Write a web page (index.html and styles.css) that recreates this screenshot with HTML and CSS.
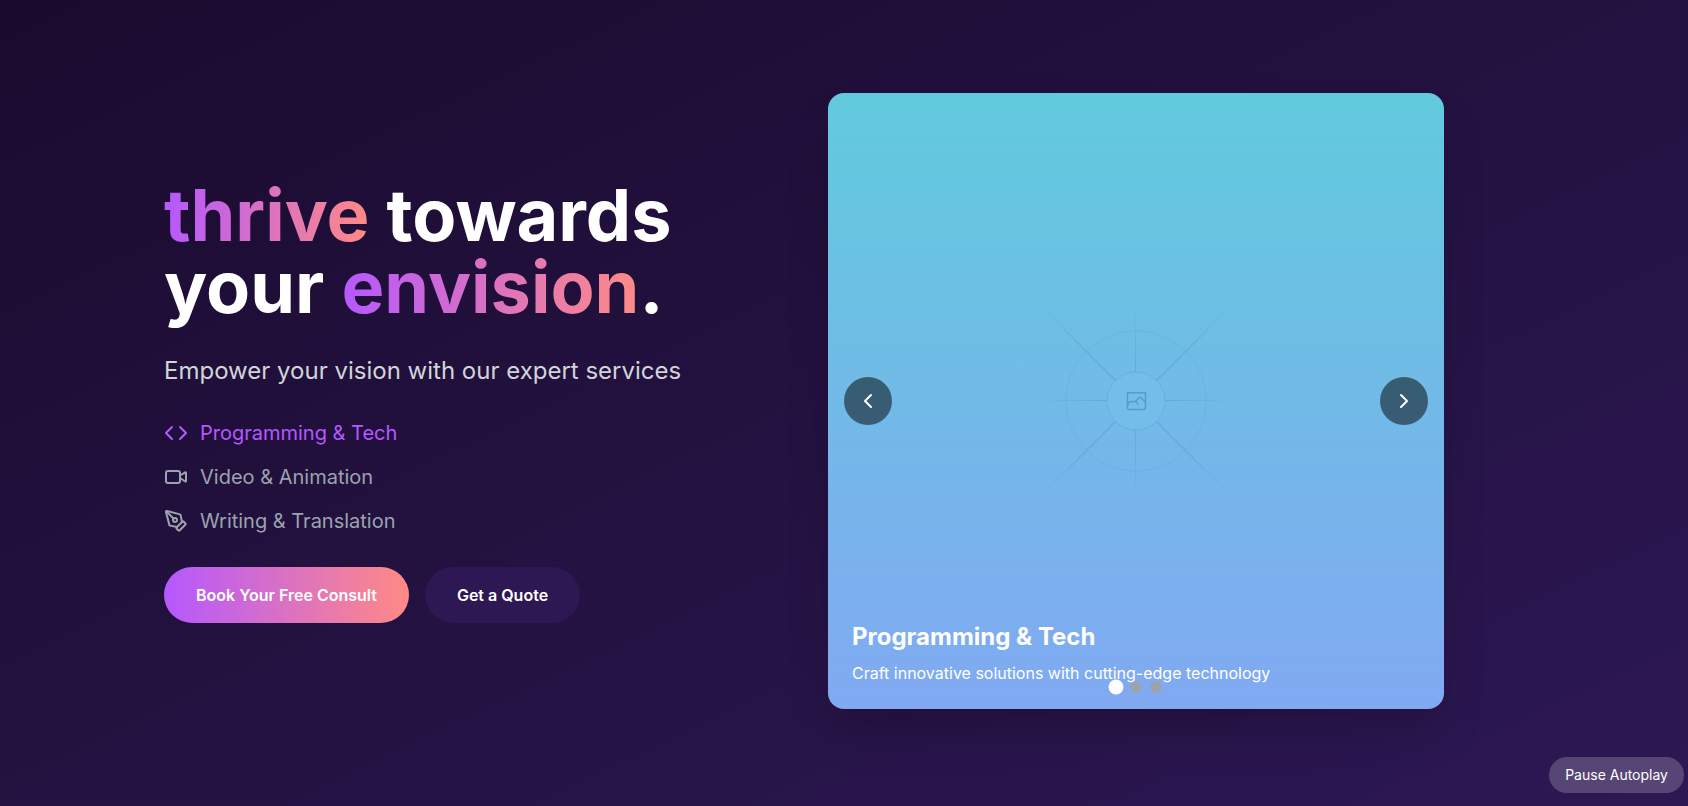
FILE: index.html
```html
<!DOCTYPE html>
<html lang="en">
<head>
<meta charset="utf-8">
<meta name="viewport" content="width=device-width, initial-scale=1">
<title>Thrive towards your envision</title>
<link rel="stylesheet" href="styles.css">
</head>
<body>
<main class="hero">
  <div class="hero-grid">
    <section class="intro">
      <h1 class="headline"><span class="accent">thrive</span> towards<br>your <span class="accent">envision</span>.</h1>
      <p class="lead">Empower your vision with our expert services</p>
      <ul class="services">
        <li class="service service-active">
          <svg class="icon" viewBox="0 0 24 24" aria-hidden="true"><path d="m16 18 6-6-6-6"/><path d="m8 6-6 6 6 6"/></svg>
          <span>Programming &amp; Tech</span>
        </li>
        <li class="service">
          <svg class="icon" viewBox="0 0 24 24" aria-hidden="true"><path d="m16 13 5.223 3.482a.5.5 0 0 0 .777-.416V7.87a.5.5 0 0 0-.752-.432L16 10.5"/><rect x="2" y="6" width="14" height="12" rx="2"/></svg>
          <span>Video &amp; Animation</span>
        </li>
        <li class="service">
          <svg class="icon" viewBox="0 0 24 24" aria-hidden="true"><path d="M15.707 21.293a1 1 0 0 1-1.414 0l-1.586-1.586a1 1 0 0 1 0-1.414l5.586-5.586a1 1 0 0 1 1.414 0l1.586 1.586a1 1 0 0 1 0 1.414z"/><path d="m18 13-1.375-6.874a1 1 0 0 0-.746-.776L3.235 2.028a1 1 0 0 0-1.207 1.207L5.35 15.879a1 1 0 0 0 .776.746L13 18"/><path d="m2.3 2.3 7.286 7.286"/><circle cx="11" cy="11" r="2"/></svg>
          <span>Writing &amp; Translation</span>
        </li>
      </ul>
      <div class="actions">
        <button type="button" class="btn btn-primary">Book Your Free Consult</button>
        <button type="button" class="btn btn-secondary">Get a Quote</button>
      </div>
    </section>
    <section class="carousel" aria-label="Services">
      <svg class="placeholder" viewBox="0 0 616 616" fill="none" aria-hidden="true">
        <defs>
          <radialGradient id="fade-straight" gradientUnits="userSpaceOnUse" cx="308" cy="308" r="100">
            <stop offset=".3" stop-color="#4a94bf" stop-opacity=".4"/>
            <stop offset="1" stop-color="#4a94bf" stop-opacity="0"/>
          </radialGradient>
          <radialGradient id="fade-diagonal" gradientUnits="userSpaceOnUse" cx="308" cy="308" r="138">
            <stop offset=".2" stop-color="#4a94bf" stop-opacity=".42"/>
            <stop offset=".6" stop-color="#4a94bf" stop-opacity=".3"/>
            <stop offset="1" stop-color="#4a94bf" stop-opacity="0"/>
          </radialGradient>
        </defs>
        <path stroke="url(#fade-straight)" d="M307.5 208v200M208 307.5h200"/>
        <path stroke="url(#fade-diagonal)" stroke-width="1.4" d="M208 208l200 200M408 208 208 408"/>
        <circle cx="308" cy="308" r="70" stroke="#4a94bf" stroke-opacity=".18"/>
        <circle class="disc" cx="308" cy="308" r="29"/>
        <g stroke="#549dcb" stroke-width="1.500" stroke-linejoin="round" stroke-linecap="round">
          <path d="M299.500 299.800h18v15.200a1.500 1.500 0 0 1-1.500 1.500h-15a1.500 1.500 0 0 1-1.500-1.500z"/>
          <path d="M299.500 312c1-2.500 2.500-3.500 4.500-3.500h3.500l3.300-3.500c.8-.8 1.700-.8 2.500 0l4.200 4.200M307.500 308.500l2.500 2.800"/>
        </g>
      </svg>
      <button type="button" class="arrow" aria-label="Previous slide">
        <svg class="chevron" viewBox="0 0 24 24" aria-hidden="true"><path d="m15 18-6-6 6-6"/></svg>
      </button>
      <button type="button" class="arrow" aria-label="Next slide">
        <svg class="chevron" viewBox="0 0 24 24" aria-hidden="true"><path d="m9 18 6-6-6-6"/></svg>
      </button>
      <div class="caption">
        <h2 class="caption-title">Programming &amp; Tech</h2>
        <p class="caption-text">Craft innovative solutions with cutting-edge technology</p>
      </div>
      <div class="dots">
        <button type="button" class="dot dot-active" aria-label="Slide 1"></button>
        <button type="button" class="dot" aria-label="Slide 2"></button>
        <button type="button" class="dot" aria-label="Slide 3"></button>
      </div>
    </section>
  </div>
  <button type="button" class="autoplay">Pause Autoplay</button>
</main>
</body>
</html>
```
FILE: styles.css
```css
* {
  box-sizing: border-box;
}

body {
  margin: 0;
  font-family: Inter, "Liberation Sans", sans-serif;
  color: #fff;
}

h1, h2, p, ul {
  margin: 0;
  padding: 0;
}

button {
  border: 0;
  padding: 0;
  font: inherit;
  color: inherit;
  cursor: pointer;
}

.hero {
  position: relative;
  min-height: 100vh;
  display: flex;
  align-items: center;
  justify-content: center;
  padding: 32px 96px 36px 16px;
  background: linear-gradient(to bottom right, #1a0b2e, #2d1854);
}

.hero-grid {
  width: 100%;
  max-width: 1280px;
  display: grid;
  grid-template-columns: 1fr 1fr;
  gap: 48px;
  align-items: center;
}

.intro {
  display: flex;
  flex-direction: column;
  gap: 32px;
}

.headline {
  font-size: 72px;
  line-height: 72px;
  font-weight: 700;
}

.accent {
  background: linear-gradient(to right, #b558ff, #ff8a85);
  background-clip: text;
  -webkit-background-clip: text;
  color: transparent;
}

.lead {
  font-size: 24px;
  line-height: 32px;
  color: #d1d5db;
}

.services {
  list-style: none;
  display: flex;
  flex-direction: column;
  gap: 16px;
}

.service {
  display: flex;
  align-items: center;
  gap: 12px;
  font-size: 20px;
  line-height: 28px;
  color: #9ca3af;
}

.service-active {
  color: #b558ff;
}

.icon,
.chevron {
  width: 24px;
  height: 24px;
  fill: none;
  stroke: currentColor;
  stroke-width: 2;
  stroke-linecap: round;
  stroke-linejoin: round;
}

.actions {
  display: flex;
  gap: 16px;
}

.btn {
  padding: 16px 32px;
  border-radius: 28px;
  font-size: 16px;
  line-height: 24px;
  font-weight: 600;
}

.btn-primary {
  background: linear-gradient(to right, #b558ff, #ff8a85);
}

.btn-secondary {
  background: #2d1854;
}

.carousel {
  position: relative;
  aspect-ratio: 1;
  display: flex;
  align-items: center;
  justify-content: space-between;
  padding: 0 16px;
  border-radius: 16px;
  background: linear-gradient(to bottom, #61cbdd, #81a9f2);
  box-shadow: 0 25px 50px -12px rgba(0, 0, 0, 0.25);
}

.placeholder {
  position: absolute;
  inset: 0;
  width: 100%;
  height: 100%;
}

.disc {
  fill: #74bdea;
  stroke: #68b0dc;
}

.arrow {
  position: relative;
  width: 48px;
  height: 48px;
  display: grid;
  place-items: center;
  border-radius: 50%;
  background: rgba(0, 0, 0, 0.5);
}

.caption {
  position: absolute;
  left: 0;
  right: 0;
  bottom: 0;
  padding: 24px;
}

.caption-title {
  margin-bottom: 8px;
  font-size: 24px;
  line-height: 32px;
  font-weight: 700;
}

.caption-text {
  font-size: 16px;
  line-height: 24px;
}

.dots {
  position: absolute;
  left: 0;
  right: 0;
  bottom: 16px;
  display: flex;
  justify-content: center;
  gap: 8px;
}

.dot {
  width: 12px;
  height: 12px;
  border-radius: 50%;
  background: #9ca3af;
}

.dot-active {
  background: #fff;
  transform: scale(1.25);
}

.autoplay {
  position: absolute;
  right: 4px;
  bottom: 13px;
  padding: 8px 16px;
  border-radius: 18px;
  background: rgba(255, 255, 255, 0.2);
  font-size: 14px;
  line-height: 20px;
}
```
